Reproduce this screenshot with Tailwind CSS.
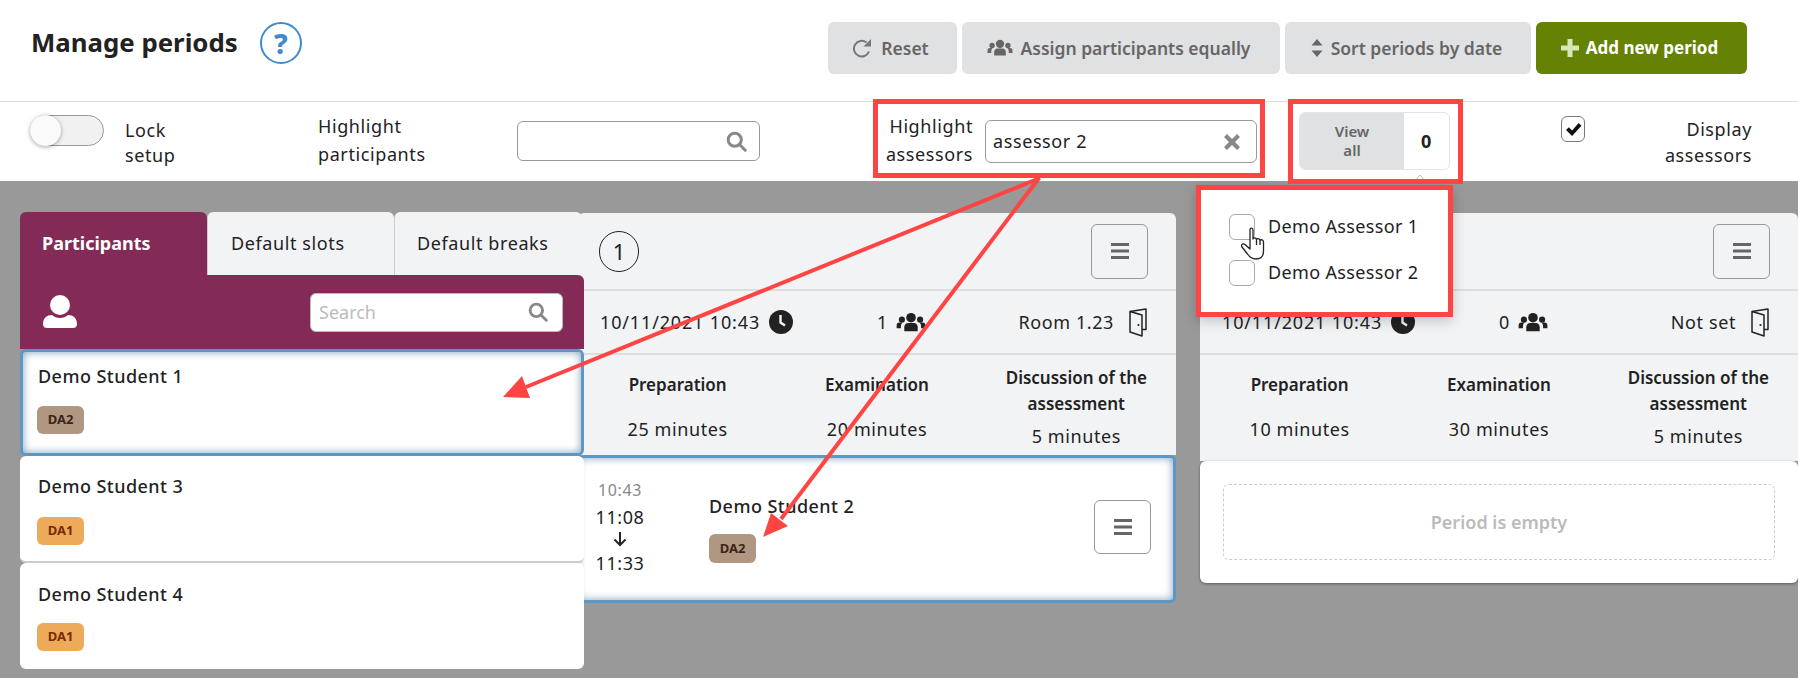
<!DOCTYPE html>
<html lang="en">
<head>
  <meta charset="UTF-8">
  <title>Manage periods</title>
  <script src="https://cdn.jsdelivr.net/npm/@tailwindcss/browser@4"></script>
</head>
<body class="bg-[#999999]">
  <div class="relative w-[1798px] h-[678px] overflow-hidden font-['Noto_Sans',sans-serif] text-[18px] tracking-[0.6px] text-[#222222] bg-[#999999]">

    <!-- header -->
    <div class="bg-white h-[181px]">
      <div class="flex items-start h-[102px] border-b border-[#dddddd]">
        <h1 class="ml-[31px] mt-[23px] text-[25.8px] tracking-normal leading-[38px] font-bold">Manage periods</h1>
        <div class="ml-[22px] mt-[22px] w-[42px] h-[42px] rounded-full border-2 border-[#428bca] flex items-center justify-center text-[28px] tracking-normal font-extrabold text-[#428bca]">?</div>
        <div class="ml-auto mr-[51px] mt-[22px] flex gap-[5px] text-[#666666] text-[17.5px] tracking-normal font-semibold">
          <button class="w-[129px] h-[52px] pr-[4px] rounded-md bg-[#e0e1e3] flex items-center justify-center gap-[9px]">
            <svg class="w-[20px] h-[20px]" viewBox="0 0 20 20" fill="none" stroke="#777777" stroke-width="2"><path d="M17 13.500A7.800 7.800 0 1 1 14.500 4.500"/><path d="M19 1v7.500h-7.500z" fill="#777777" stroke="none"/></svg>
            Reset
          </button>
          <button class="w-[318px] h-[52px] pr-[5px] rounded-md bg-[#e0e1e3] flex items-center justify-center gap-[8px]">
            <svg class="w-[26px] h-[20px]" viewBox="0 0 30 24" fill="#666666"><circle cx="15" cy="7" r="5"/><circle cx="5.5" cy="9" r="3.2"/><circle cx="24.5" cy="9" r="3.2"/><path d="M8 21v-4c0-3 2-4.500 4-4.500h6c2 0 4 1.500 4 4.500v4z"/><path d="M0 18v-3c0-2 1-3 3-3h3c-.8 1-1.500 2.500-1.500 4v2zM30 18v-3c0-2-1-3-3-3h-3c.8 1 1.500 2.500 1.500 4v2z"/></svg>
            Assign participants equally
          </button>
          <button class="w-[246px] h-[52px] pr-[3px] rounded-md bg-[#e0e1e3] flex items-center justify-center gap-[8px]">
            <svg class="w-[12px] h-[20px]" viewBox="0 0 12 20" fill="#666666"><path d="M6 1l5.500 6.500H.5zM6 19L.5 12.500h11z"/></svg>
            Sort periods by date
          </button>
          <button class="w-[211px] h-[52px] pr-[4px] rounded-md bg-[#668204] text-white text-[17px] font-bold flex items-center justify-center gap-[7px]">
            <svg class="w-[18px] h-[18px]" viewBox="0 0 18 18" fill="#dbe6b8"><path d="M6.500 0h5v6.500H18v5h-6.500V18h-5v-6.500H0v-5h6.500z"/></svg>
            Add new period
          </button>
        </div>
      </div>

      <div class="flex items-start h-[79px]">
        <div class="relative ml-[30px] mt-[13px] w-[74px] h-[31px] rounded-full border border-[#999999] bg-[#f1f1f1] shrink-0">
          <div class="absolute left-[-1px] top-[-1px] w-[31px] h-[31px] rounded-full bg-[#fafafa] shadow-[0_1px_4px_rgba(0,0,0,0.35)]"></div>
        </div>
        <div class="ml-[21px] w-[193px] mt-[16px] leading-[25px] shrink-0">Lock<br>setup</div>
        <div class="w-[199px] mt-[10px] leading-[28px] shrink-0">Highlight<br>participants</div>
        <div class="mt-[19px] w-[243px] h-[40px] rounded-md border border-[#999999] flex items-center justify-end pr-[12px] shrink-0">
          <svg class="w-[21px] h-[21px]" viewBox="0 0 24 24" fill="none" stroke="#888888" stroke-width="3.4"><circle cx="10" cy="10" r="7.500"/><path d="M15.500 15.500L22 22" stroke-linecap="round"/></svg>
        </div>
        <div class="w-[213px] mt-[10px] leading-[28px] text-right shrink-0">Highlight<br>assessors</div>
        <div class="ml-[12px] mt-[18px] w-[272px] h-[43px] rounded-md border border-[#999999] flex items-center justify-between pl-[7px] pr-[15px] shrink-0">
          <span>assessor 2</span>
          <svg class="w-[18px] h-[18px]" viewBox="0 0 18 18" fill="#888888"><path d="M4 1l5 5 5-5 3 3-5 5 5 5-3 3-5-5-5 5-3-3 5-5-5-5z"/></svg>
        </div>
        <div class="ml-[42px] mt-[10px] w-[151px] h-[58px] rounded-md border border-[#e4e4e4] flex overflow-hidden shrink-0">
          <div class="w-[104px] bg-[#e0e1e3] text-[#666666] text-[15px] tracking-normal leading-[19px] font-semibold flex items-center justify-center text-center">View<br>all</div>
          <div class="flex-1 flex items-center justify-center font-bold">0</div>
        </div>
        <div class="ml-[111px] mt-[14px] w-[24px] h-[26px] rounded-md border border-[#777777] flex items-center justify-center shrink-0">
          <svg class="w-[17px] h-[15px]" viewBox="0 0 18 16" fill="#111111"><path d="M1 8.500l3-3 3.500 3.500L14.500 1 17.500 4 7.500 15z"/></svg>
        </div>
        <div class="w-[167px] mt-[14px] leading-[26px] text-right shrink-0">Display<br>assessors</div>
      </div>
    </div>

    <!-- board -->
    <div class="flex items-start mt-[31px] ml-[20px]">

      <!-- participants column -->
      <div class="relative z-10 w-[564px] shrink-0">
        <div class="flex h-[63px]">
          <div class="w-[187px] rounded-t-md bg-[#832b56] text-white tracking-normal font-bold flex items-center pl-[22px]">Participants</div>
          <div class="w-[187px] rounded-t-md bg-[#f2f3f5] border-l border-[#cccccc] flex items-center pl-[23px]">Default slots</div>
          <div class="w-[188px] rounded-t-md bg-[#f2f3f5] border-l border-[#cccccc] flex items-center pl-[22px]">Default breaks</div>
        </div>
        <div class="h-[74px] bg-[#832b56] rounded-tr-md flex items-center justify-between pl-[23px] pr-[21px]">
          <svg class="w-[34px] h-[33px] mt-[-2px]" viewBox="0 0 34 33" fill="#ffffff"><circle cx="17" cy="10" r="10"/><path d="M0 29c0-6 4-9 9-9 2 2 5 3 8 3s6-1 8-3c5 0 9 3 9 9 0 3-2 4-4 4H4c-2 0-4-1-4-4z"/></svg>
          <div class="w-[253px] h-[39px] rounded-md bg-white border border-[#bbbbbb] flex items-center justify-between pl-[8px] pr-[14px]">
            <span class="text-[#bbbbbb] tracking-normal">Search</span>
            <svg class="w-[20px] h-[20px]" viewBox="0 0 24 24" fill="none" stroke="#888888" stroke-width="3.400"><circle cx="10" cy="10" r="7.500"/><path d="M15.500 15.500L22 22" stroke-linecap="round"/></svg>
          </div>
        </div>
        <div class="h-[107px] bg-white rounded-md border-[3px] border-[#5f97c4] shadow-[inset_0_0_8px_#7f9fbb] pl-[14px] pt-[12px]">
          <div class="ml-[1px] leading-[24px] font-medium tracking-[0.45px]">Demo Student 1</div>
          <div class="mt-[18px] w-[47px] h-[28px] rounded-md bg-[#b09782] text-[#3c2515] text-[13px] tracking-normal font-bold flex items-center justify-center">DA2</div>
        </div>
        <div class="h-[107px] bg-white rounded-md border-b-2 border-[#cccccc] pl-[17px] pt-[18px]">
          <div class="ml-[1px] leading-[24px] font-medium tracking-[0.45px]">Demo Student 3</div>
          <div class="mt-[19px] w-[47px] h-[28px] rounded-md bg-[#edaa5a] text-[#7a2a05] text-[13px] tracking-normal font-bold flex items-center justify-center">DA1</div>
        </div>
        <div class="h-[106px] bg-white rounded-md pl-[17px] pt-[19px]">
          <div class="ml-[1px] leading-[24px] font-medium tracking-[0.45px]">Demo Student 4</div>
          <div class="mt-[17px] w-[47px] h-[28px] rounded-md bg-[#edaa5a] text-[#7a2a05] text-[13px] tracking-normal font-bold flex items-center justify-center">DA1</div>
        </div>
      </div>

      <!-- period 1 -->
      <div class="ml-[-6px] mt-[1px] w-[598px] shrink-0">
        <div class="bg-[#f2f3f5] rounded-t-md">
          <div class="h-[78px] border-b-2 border-[#dddddd] flex items-center justify-between pl-[21px] pr-[28px]">
            <div class="w-[40px] h-[41px] rounded-full border border-[#222222] flex items-center justify-center text-[22px] tracking-normal">1</div>
            <button class="w-[57px] h-[55px] rounded-md border border-[#999999] flex items-center justify-center">
              <svg class="w-[20px] h-[18px]" viewBox="0 0 20 18" fill="#666666"><path d="M1 1h18v3H1zM1 7.500h18v3H1zM1 14h18v3H1z"/></svg>
            </button>
          </div>
          <div class="h-[64px] border-b-2 border-[#dddddd] grid grid-cols-[277px_1fr_auto] items-center pl-[22px] pr-[29px]">
            <div class="flex items-center gap-[9px] tracking-[0.85px]">10/11/2021 10:43
              <svg class="w-[24px] h-[24px]" viewBox="0 0 24 24"><circle cx="12" cy="12" r="12" fill="#222222"/><path d="M11.500 5v7.500l4.500 3" fill="none" stroke="#f2f3f5" stroke-width="2.400"/></svg>
            </div>
            <div class="flex items-center gap-[8px]">1
              <svg class="w-[30px] h-[23px]" viewBox="0 0 30 24" fill="#222222"><circle cx="15" cy="7" r="5"/><circle cx="5.500" cy="9" r="3.200"/><circle cx="24.500" cy="9" r="3.200"/><path d="M8 21v-4c0-3 2-4.500 4-4.500h6c2 0 4 1.500 4 4.500v4z"/><path d="M0 18v-3c0-2 1-3 3-3h3c-.8 1-1.500 2.500-1.500 4v2zM30 18v-3c0-2-1-3-3-3h-3c.8 1 1.500 2.500 1.500 4v2z"/></svg>
            </div>
            <div class="flex items-center gap-[15px]">Room 1.23
              <svg class="w-[18px] h-[29px]" viewBox="0 0 18 29" fill="none" stroke="#222222" stroke-width="1.500" stroke-linejoin="round"><path d="M1 3.500L17 1v20.500h-4"/><path d="M1 3.500L13 7v21L1 24z"/><circle cx="9.500" cy="17" r="1.100" fill="#222222" stroke="none"/></svg>
            </div>
          </div>
          <div class="h-[100px] grid grid-cols-3 text-center">
            <div class="pt-[17px]"><div class="text-[17px] tracking-normal font-semibold leading-[26px]">Preparation</div><div class="mt-[18px] leading-[26px]">25 minutes</div></div>
            <div class="pt-[17px]"><div class="text-[17px] tracking-normal font-semibold leading-[26px]">Examination</div><div class="mt-[18px] leading-[26px]">20 minutes</div></div>
            <div class="pt-[10px]"><div class="text-[17px] tracking-normal font-semibold leading-[26px]">Discussion of the<br>assessment</div><div class="mt-[6px] leading-[26px]">5 minutes</div></div>
          </div>
        </div>
        <div class="h-[148px] bg-white rounded-md border-[3px] border-l-0 border-[#5f97c4] shadow-[inset_0_0_8px_#7f9fbb] flex items-start">
          <div class="w-[84px] text-center pt-[20px] shrink-0">
            <div class="text-[16px] leading-[24px] text-[#888888]">10:43</div>
            <div class="mt-[3px] leading-[24px]">11:08</div>
            <svg class="w-[14px] h-[16px] mx-auto mt-[2px] mb-[4px]" viewBox="0 0 14 16" fill="none" stroke="#222222" stroke-width="2"><path d="M7 1v13M1.500 8.500L7 14l5.500-5.500"/></svg>
            <div class="leading-[24px]">11:33</div>
          </div>
          <div class="ml-[47px] pt-[36px]">
            <div class="leading-[24px] font-medium tracking-[0.45px]">Demo Student 2</div>
            <div class="mt-[16px] w-[47px] h-[29px] rounded-md bg-[#b09782] text-[#3c2515] text-[13px] tracking-normal font-bold flex items-center justify-center">DA2</div>
          </div>
          <button class="ml-auto mr-[22px] mt-[42px] w-[57px] h-[54px] rounded-md border border-[#999999] flex items-center justify-center">
            <svg class="w-[20px] h-[18px]" viewBox="0 0 20 18" fill="#666666"><path d="M1 1h18v3H1zM1 7.500h18v3H1zM1 14h18v3H1z"/></svg>
          </button>
        </div>
      </div>

      <!-- period 2 -->
      <div class="ml-[24px] mt-[1px] w-[598px] shrink-0">
        <div class="bg-[#f2f3f5] rounded-t-md">
          <div class="h-[78px] border-b-2 border-[#dddddd] flex items-center justify-end pr-[28px]">
            <button class="w-[57px] h-[55px] rounded-md border border-[#999999] flex items-center justify-center">
              <svg class="w-[20px] h-[18px]" viewBox="0 0 20 18" fill="#666666"><path d="M1 1h18v3H1zM1 7.500h18v3H1zM1 14h18v3H1z"/></svg>
            </button>
          </div>
          <div class="h-[64px] border-b-2 border-[#dddddd] grid grid-cols-[277px_1fr_auto] items-center pl-[22px] pr-[29px]">
            <div class="flex items-center gap-[9px] tracking-[0.85px]">10/11/2021 10:43
              <svg class="w-[24px] h-[24px]" viewBox="0 0 24 24"><circle cx="12" cy="12" r="12" fill="#222222"/><path d="M11.500 5v7.500l4.500 3" fill="none" stroke="#f2f3f5" stroke-width="2.400"/></svg>
            </div>
            <div class="flex items-center gap-[8px]">0
              <svg class="w-[30px] h-[23px]" viewBox="0 0 30 24" fill="#222222"><circle cx="15" cy="7" r="5"/><circle cx="5.500" cy="9" r="3.200"/><circle cx="24.500" cy="9" r="3.200"/><path d="M8 21v-4c0-3 2-4.500 4-4.500h6c2 0 4 1.500 4 4.500v4z"/><path d="M0 18v-3c0-2 1-3 3-3h3c-.8 1-1.500 2.500-1.500 4v2zM30 18v-3c0-2-1-3-3-3h-3c.8 1 1.500 2.500 1.500 4v2z"/></svg>
            </div>
            <div class="flex items-center gap-[15px]">Not set
              <svg class="w-[18px] h-[29px]" viewBox="0 0 18 29" fill="none" stroke="#222222" stroke-width="1.500" stroke-linejoin="round"><path d="M1 3.500L17 1v20.500h-4"/><path d="M1 3.500L13 7v21L1 24z"/><circle cx="9.500" cy="17" r="1.100" fill="#222222" stroke="none"/></svg>
            </div>
          </div>
          <div class="h-[106px] grid grid-cols-3 text-center">
            <div class="pt-[17px]"><div class="text-[17px] tracking-normal font-semibold leading-[26px]">Preparation</div><div class="mt-[18px] leading-[26px]">10 minutes</div></div>
            <div class="pt-[17px]"><div class="text-[17px] tracking-normal font-semibold leading-[26px]">Examination</div><div class="mt-[18px] leading-[26px]">30 minutes</div></div>
            <div class="pt-[10px]"><div class="text-[17px] tracking-normal font-semibold leading-[26px]">Discussion of the<br>assessment</div><div class="mt-[6px] leading-[26px]">5 minutes</div></div>
          </div>
        </div>
        <div class="h-[122px] bg-white rounded-md shadow-[0_1px_3px_rgba(0,0,0,0.4)] px-[23px] pt-[23px]">
          <div class="h-[76px] rounded-md border border-dashed border-[#cccccc] flex items-center justify-center text-[#bbbbbb] tracking-normal font-semibold">Period is empty</div>
        </div>
      </div>
    </div>

    <!-- caret under the view-all counter -->
    <svg class="absolute left-[1413px] top-[174px] w-[14px] h-[8px]" viewBox="0 0 14 8" fill="#ffffff" stroke="#bbbbbb"><path d="M1 8l6-7 6 7"/></svg>

    <!-- assessor dropdown -->
    <div class="absolute left-[1196px] top-[185px] w-[257px] h-[132px] bg-white border-[5px] border-[#ff4444] shadow-[0_4px_12px_rgba(0,0,0,0.2)] z-20 pl-[28px] pt-[24px] tracking-[0.35px]">
      <div class="flex items-center gap-[13px] h-[26px]"><span class="w-[26px] h-[26px] rounded-md border border-[#aaaaaa]"></span><span class="mt-[-2px]">Demo Assessor 1</span></div>
      <div class="flex items-center gap-[13px] h-[26px] mt-[20px]"><span class="w-[26px] h-[26px] rounded-md border border-[#aaaaaa]"></span><span class="mt-[-2px]">Demo Assessor 2</span></div>
    </div>

    <!-- annotation boxes -->
    <div class="absolute left-[873px] top-[99px] w-[392px] h-[79px] border-[5px] border-[#ff4444] z-20"></div>
    <div class="absolute left-[1288px] top-[99px] w-[175px] h-[85px] border-[5px] border-[#ff4444] z-20"></div>

    <!-- hand cursor -->
    <svg class="absolute left-[1241px] top-[227px] w-[26px] h-[33px] z-30" viewBox="0 0 26 33" fill="#ffffff" stroke="#222222" stroke-width="1.300" stroke-linejoin="round"><path d="M9 3c0-2.500 3-2.500 3 0v9c1-1.500 3-1.500 3.500.5 1-1.500 3-1 3.500.8 1-1 3.500-.5 3.500 1.700v9c0 5-2.500 8-7.500 8-4.500 0-6.500-2-8.500-5L1 20c-1.500-2.500 1-4 3-2.500L9 22z"/><path d="M15.500 12.500V18M19 13.300V18" fill="none"/></svg>

    <!-- annotation arrows -->
    <svg class="absolute left-0 top-0 w-[1798px] h-[678px] z-30 pointer-events-none" viewBox="0 0 1798 678">
      <path d="M1040 178L526 387" fill="none" stroke="#ff4444" stroke-width="4"/>
      <path d="M503 397L522 376L526 387L530 398z" fill="#ff4444"/>
      <path d="M1039 178L781 519" fill="none" stroke="#ff4444" stroke-width="4"/>
      <path d="M763 537L771 513L780 520L788 526z" fill="#ff4444"/>
    </svg>
  </div>
</body>
</html>
